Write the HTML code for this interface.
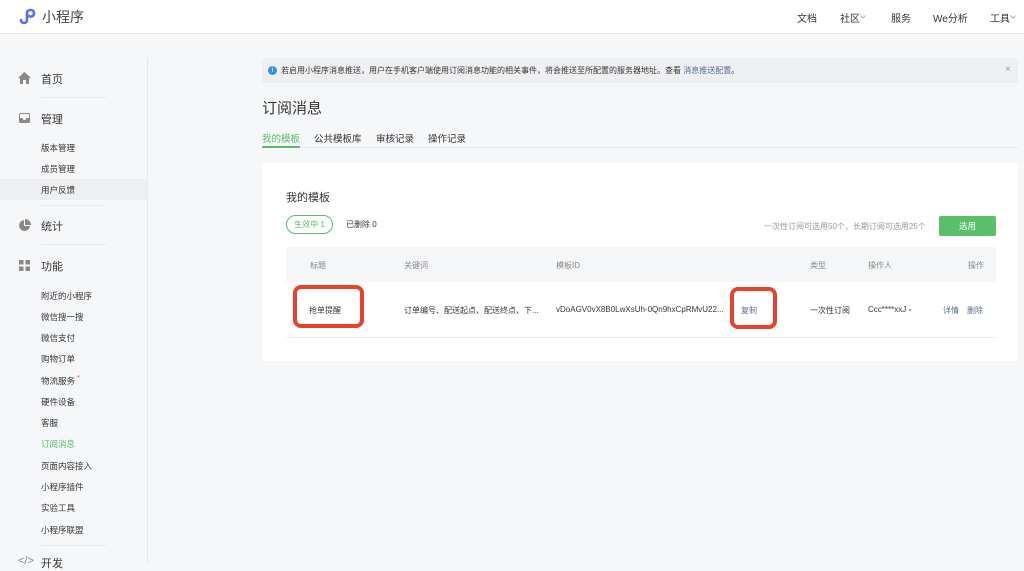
<!DOCTYPE html>
<html><head><meta charset="utf-8"><style>
*{margin:0;padding:0;box-sizing:border-box}
body{width:1024px;height:564px;overflow:hidden;background:#f6f7f9;font-family:"Liberation Sans","Noto Sans CJK SC",sans-serif;color:#353535;position:relative}
.a{position:absolute;white-space:nowrap}
.hdr{left:0;top:0;width:1024px;height:34px;background:#fff;border-bottom:1px solid #e7e7e7}
.nav{font-size:10px;color:#353535;top:10px}
.side{font-size:11px;color:#353535}
.sub{font-size:8.5px;color:#353535;left:41px}
.div{left:41px;width:65px;height:1px;background:#e7e8ea}
.th{font-size:8px;color:#888;top:260px}
.td{font-size:8px;color:#353535;top:305px}
.red{border:4px solid #e8412c;border-radius:8px}
</style></head><body>
<div class="a hdr"></div>
<svg class="a" style="left:18px;top:7px" width="20" height="18" viewBox="0 0 20 18"><path d="M3 13c0 4 6 4 6 0V6c0-4 7-4 7 0s-4 4-5 3" fill="none" stroke="#5b6ef0" stroke-width="2.6" stroke-linecap="round"/></svg>
<div class="a" style="left:42px;top:7px;font-size:14px;color:#444">小程序</div>
<div class="a nav" style="left:797px">文档</div>
<div class="a nav" style="left:840px">社区</div>
<svg class="a" style="left:860px;top:15px" width="6" height="4" viewBox="0 0 6 4"><path d="M0.5 0.5L3 3 5.5 0.5" fill="none" stroke="#999" stroke-width="0.8"/></svg>
<div class="a nav" style="left:891px">服务</div>
<div class="a nav" style="left:933px">We分析</div>
<div class="a nav" style="left:990px">工具</div>
<svg class="a" style="left:1010px;top:15px" width="6" height="4" viewBox="0 0 6 4"><path d="M0.5 0.5L3 3 5.5 0.5" fill="none" stroke="#999" stroke-width="0.8"/></svg>

<div class="a" style="left:147px;top:58px;width:1px;height:506px;background:#e7e8ea"></div>
<div class="a" style="left:0;top:179px;width:147px;height:21px;background:#eeeff1"></div>
<svg class="a" style="left:18px;top:72px" width="13" height="12" viewBox="0 0 13 12"><path d="M6.5 0L0 6h2v6h3V8h3v4h3V6h2z" fill="#888"/></svg>
<div class="a side" style="left:41px;top:71px">首页</div>
<div class="a div" style="top:97px"></div>
<svg class="a" style="left:19px;top:113px" width="11" height="10" viewBox="0 0 11 10"><rect x="0.5" y="0.5" width="10" height="9" rx="1.5" fill="none" stroke="#888"/><path d="M0.5 5h3l1 2h2l1-2h3v4.5H0.5z" fill="#888"/></svg>
<div class="a side" style="left:41px;top:111px">管理</div>
<div class="a sub" style="top:142px">版本管理</div>
<div class="a sub" style="top:163px">成员管理</div>
<div class="a sub" style="top:184px">用户反馈</div>
<div class="a div" style="top:205px"></div>
<svg class="a" style="left:19px;top:219px" width="12" height="12" viewBox="0 0 12 12"><path d="M6 0v6h6A6 6 0 0 0 6 0z M5 1A5.5 5.5 0 1 0 11 7H5z" fill="#888"/></svg>
<div class="a side" style="left:41px;top:218px">统计</div>
<div class="a div" style="top:244px"></div>
<svg class="a" style="left:19px;top:260px" width="11" height="11" viewBox="0 0 11 11"><rect width="4.5" height="4.5" fill="#888"/><rect x="6.5" width="4.5" height="4.5" fill="#888"/><rect y="6.5" width="4.5" height="4.5" fill="#888"/><rect x="6.5" y="6.5" width="4.5" height="4.5" fill="#888"/></svg>
<div class="a side" style="left:41px;top:258px">功能</div>
<div class="a sub" style="top:290px">附近的小程序</div>
<div class="a sub" style="top:311px">微信搜一搜</div>
<div class="a sub" style="top:332px">微信支付</div>
<div class="a sub" style="top:353px">购物订单</div>
<div class="a sub" style="top:375px">物流服务<span style="color:#e64340;font-size:7px;vertical-align:top"> *</span></div>
<div class="a sub" style="top:396px">硬件设备</div>
<div class="a sub" style="top:417px">客服</div>
<div class="a sub" style="top:438px;color:#5bb96a">订阅消息</div>
<div class="a sub" style="top:460px">页面内容接入</div>
<div class="a sub" style="top:481px">小程序插件</div>
<div class="a sub" style="top:502px">实验工具</div>
<div class="a sub" style="top:524px">小程序联盟</div>
<div class="a div" style="top:545px"></div>
<div class="a side" style="left:18px;top:555px;color:#888">&lt;/&gt;</div>
<div class="a side" style="left:41px;top:555px">开发</div>

<div class="a" style="left:262px;top:58px;width:756px;height:25px;background:#eeeff1;border-radius:2px"></div>
<div class="a" style="left:268px;top:66px;width:9px;height:9px;border-radius:50%;background:#3a8ee6;color:#fff;font-size:7px;text-align:center;line-height:9px">i</div>
<div class="a" style="left:281px;top:65px;font-size:8px;color:#353535">若启用小程序消息推送，用户在手机客户端使用订阅消息功能的相关事件，将会推送至所配置的服务器地址。查看 <span style="color:#576b95">消息推送配置</span>。</div>
<div class="a" style="left:1005px;top:64px;font-size:10px;color:#999">×</div>
<div class="a" style="left:262px;top:97px;font-size:15px;color:#353535">订阅消息</div>
<div class="a" style="left:262px;top:131px;font-size:9.5px;color:#5bb96a">我的模板</div>
<div class="a" style="left:314px;top:131px;font-size:9.5px">公共模板库</div>
<div class="a" style="left:376px;top:131px;font-size:9.5px">审核记录</div>
<div class="a" style="left:428px;top:131px;font-size:9.5px">操作记录</div>
<div class="a" style="left:262px;top:147px;width:756px;height:1px;background:#e7e8ea"></div>
<div class="a" style="left:262px;top:146px;width:38px;height:2px;background:#5bb96a"></div>

<div class="a" style="left:262px;top:163px;width:756px;height:198px;background:#fff"></div>
<div class="a" style="left:286px;top:189px;font-size:11px">我的模板</div>
<div class="a" style="left:286px;top:215px;width:47px;height:19px;border:1px solid #5bb96a;border-radius:10px;font-size:8px;color:#5bb96a;text-align:center;line-height:17px">生效中 1</div>
<div class="a" style="left:346px;top:219px;font-size:8px">已删除 0</div>
<div class="a" style="left:764px;top:221px;font-size:8px;color:#999">一次性订阅可选用50个，长期订阅可选用25个</div>
<div class="a" style="left:939px;top:216px;width:57px;height:20px;background:#5bbf6a;border-radius:2px;color:#fff;font-size:8.5px;text-align:center;line-height:20px">选用</div>

<div class="a" style="left:286px;top:247px;width:710px;height:35px;background:#f5f6f8"></div>
<div class="a th" style="left:310px">标题</div>
<div class="a th" style="left:404px">关键词</div>
<div class="a th" style="left:556px">模板ID</div>
<div class="a th" style="left:810px">类型</div>
<div class="a th" style="left:868px">操作人</div>
<div class="a th" style="left:968px">操作</div>
<div class="a td" style="left:309px">抢单提醒</div>
<div class="a td" style="left:404px">订单编号、配送起点、配送终点、下...</div>
<div class="a td" style="left:556px">vDoAGV0vX8B0LwXsUh-0Qn9hxCpRMvU22...</div>
<div class="a td" style="left:741px;color:#576b95">复制</div>
<div class="a td" style="left:810px">一次性订阅</div>
<div class="a td" style="left:868px">Ccc****xxJ <span style="color:#999;font-size:6px">▾</span></div>
<div class="a td" style="left:943px;color:#576b95">详情</div>
<div class="a td" style="left:967px;color:#576b95">删除</div>
<div class="a" style="left:286px;top:337px;width:710px;height:1px;background:#eee"></div>
<div class="a red" style="left:293px;top:285px;width:71px;height:43px"></div>
<div class="a red" style="left:730px;top:287px;width:47px;height:42px"></div>
</body></html>
